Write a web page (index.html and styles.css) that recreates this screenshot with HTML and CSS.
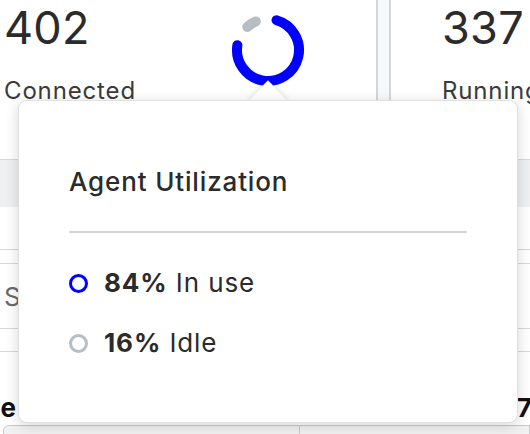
FILE: index.html
```html
<!DOCTYPE html>
<html>
<head>
<meta charset="utf-8">
<link rel="stylesheet" href="styles.css">
</head>
<body>
<div class="page">
  <section class="stats">
    <div class="stat stat-left">
      <div class="stat-text">
        <div class="stat-num">402</div>
        <div class="stat-label">Connected</div>
      </div>
      <svg class="donut" width="80" height="80" viewBox="0 0 80 80">
        <path d="M48.54 10.20 A31 31 0 1 1 9.38 35.15" fill="none" stroke="#0000ff" stroke-width="10" stroke-linecap="round"/>
        <path d="M19.26 16.96 A31 31 0 0 1 27.89 11.46" fill="none" stroke="#b7bec3" stroke-width="10" stroke-linecap="round"/>
      </svg>
    </div>
    <div class="stat-gap"></div>
    <div class="stat stat-right">
      <div class="stat-text">
        <div class="stat-num">337</div>
        <div class="stat-label">Running</div>
      </div>
    </div>
  </section>

  <section class="table">
    <div class="thead"></div>
    <div class="trow r1"></div>
    <div class="trow r2"></div>
    <div class="trow r3"><span class="cell-muted">Status</span></div>
    <div class="trow r4"></div>
    <div class="trow r5">
      <div class="clip-left"><span class="cell-bold">Average</span></div>
      <span class="cell-bold right">337</span>
    </div>
    <div class="actions">
      <div class="action-box first"></div>
      <div class="action-box second"></div>
    </div>
  </section>

  <div class="popover">
    <div class="popover-arrow"></div>
    <div class="popover-body">
      <h3 class="popover-title">Agent Utilization</h3>
      <hr class="popover-rule">
      <ul class="legend">
        <li class="legend-item"><span class="dot dot-blue"></span><b>84%</b>&nbsp;In use</li>
        <li class="legend-item"><span class="dot dot-gray"></span><b>16%</b>&nbsp;Idle</li>
      </ul>
    </div>
  </div>
</div>
</body>
</html>
```

FILE: styles.css
```css
* { box-sizing: border-box; }
html, body {
  margin: 0;
  padding: 0;
  background: #ffffff;
  overflow: hidden;
}
body {
  font-family: Inter, "Liberation Sans", sans-serif;
  color: #2b2b2b;
  width: 530px;
  height: 434px;
}
.page {
  position: relative;
  width: 530px;
  height: 434px;
  overflow: hidden;
}

/* stats */
.stats {
  display: flex;
  height: 159px;
}
.stat {
  display: flex;
  align-items: flex-start;
  padding-top: 1px;
}
.stat-left {
  flex: none;
  width: 378px;
  padding-left: 4px;
  border-right: 2px solid #d4d6da;
}
.stat-gap {
  flex: none;
  width: 11px;
  background: #f7f8fa;
}
.stat-right {
  flex: 1;
  min-width: 0;
  padding-left: 51px;
  border-left: 2px solid #d4d6da;
  white-space: nowrap;
}
.stat-left .stat-text {
  width: 224px;
}
.stat-num {
  font-size: 45px;
  line-height: 54px;
  font-weight: 400;
  letter-spacing: 0.3px;
  color: #2b2b2b;
}
.stat-label {
  margin-top: 21px;
  font-size: 24px;
  line-height: 30px;
  letter-spacing: 0.85px;
  color: #3a3a3a;
}
.donut {
  margin-top: 9px;
  flex: none;
}

/* table */
.table {
  border-top: 1px solid #d6d7d9;
}
.thead {
  height: 47px;
  background: #eef0f2;
}
.trow {
  display: flex;
  align-items: center;
  border-bottom: 1px solid #d6d7d9;
  white-space: nowrap;
}
.r1 { height: 43px; }
.r2 { height: 14px; }
.r3 { height: 65px; padding-left: 4px; }
.r4 { height: 23px; }
.r5 { height: 73px; justify-content: space-between; padding-top: 38px; border-bottom: none; }
.cell-muted {
  font-size: 26px;
  letter-spacing: 0.8px;
  color: #6a6a6a;
}
.cell-bold {
  font-size: 26px;
  font-weight: 700;
  color: #111;
}
.clip-left {
  width: 16px;
  overflow: hidden;
  display: flex;
  justify-content: flex-end;
}
.right { margin-right: -2px; }
.actions {
  display: flex;
  padding-left: 3px;
}
.action-box {
  height: 40px;
  background: #f1f1f2;
  border: 1px solid #c9cacc;
}
.action-box.first {
  width: 297px;
  border-radius: 6px 0 0 0;
}
.action-box.second {
  flex: 1;
  border-left: none;
}

/* popover */
.popover {
  position: absolute;
  left: 18px;
  top: 100px;
  width: 500px;
}
.popover-arrow {
  position: absolute;
  left: 236px;
  top: -14px;
  width: 28px;
  height: 28px;
  background: #fff;
  transform: rotate(45deg);
  box-shadow: 0 0 6px rgba(0, 0, 0, 0.12);
  border: 1px solid rgba(0, 0, 0, 0.06);
}
.popover-body {
  position: relative;
  background: #fff;
  border-radius: 9px;
  border: 1px solid rgba(0, 0, 0, 0.12);
  box-shadow: 0 3px 14px rgba(0, 0, 0, 0.16);
  padding: 65px 50px 63px 50px;
}
.popover-title {
  margin: 0;
  font-size: 26px;
  line-height: 32px;
  font-weight: 500;
  letter-spacing: 0.85px;
  color: #2b2b2b;
}
.popover-rule {
  margin: 33px 0 0 0;
  border: none;
  height: 2px;
  background: #d5d5d5;
}
.legend {
  list-style: none;
  margin: 34px 0 0 0;
  padding: 0;
  display: flex;
  flex-direction: column;
  gap: 28px;
}
.legend-item {
  display: flex;
  align-items: center;
  font-size: 26px;
  line-height: 32px;
  letter-spacing: 0.9px;
  color: #2b2b2b;
}
.legend-item b {
  font-weight: 700;
}
.dot {
  width: 19px;
  height: 19px;
  border-radius: 50%;
  border: 3.5px solid #0000ff;
  margin-right: 16px;
  flex: none;
}
.dot-gray {
  border-color: #b7bec3;
}
```
